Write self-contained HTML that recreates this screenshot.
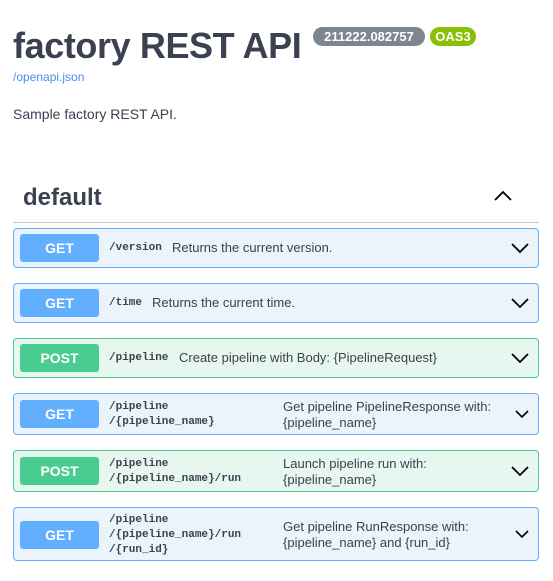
<!DOCTYPE html>
<html><head><meta charset="utf-8"><style>
*{box-sizing:border-box;margin:0;padding:0}
body{width:553px;height:581px;background:#fff;font-family:"Liberation Sans",Arial,sans-serif;color:#3b4151;position:relative;overflow:hidden}
.a{position:absolute}
h1{position:absolute;left:13px;top:25px;font-size:36px;font-weight:bold;color:#3b4151;letter-spacing:-0.4px;white-space:nowrap}
.badge{position:absolute;height:19px;border-radius:10px;color:#fff;font-weight:bold;font-size:13px;line-height:19px;text-align:center}
.op{position:absolute;left:13px;width:526px;border:1px solid;border-radius:4px}
.get{background:#ebf3fb;border-color:#61affe}
.post{background:#e8f6f0;border-color:#49cc90}
.m{position:absolute;left:6px;width:79px;height:28px;border-radius:3px;color:#fff;font-weight:bold;font-size:14px;line-height:28px;text-align:center}
.get .m{background:#61affe}.post .m{background:#49cc90}
.p{position:absolute;left:95px;font-family:"Liberation Mono","DejaVu Sans Mono",monospace;font-weight:bold;font-size:11px;color:#3b4151;line-height:15px;white-space:nowrap}
.d{position:absolute;font-size:13px;color:#3b4151;line-height:16px;white-space:nowrap}
.chev{position:absolute;right:8px}
</style></head><body>
<h1>factory REST API</h1>
<div class="badge" style="left:313px;top:27px;width:112px;background:#7d8492">211222.082757</div>
<div class="badge" style="left:430px;top:27px;width:46px;background:#89bf04">OAS3</div>
<div class="a" style="left:13px;top:70px;font-size:12px;color:#4990e2">/openapi.json</div>
<div class="a" style="left:13px;top:106px;font-size:14px">Sample factory REST API.</div>
<div class="a" style="left:23px;top:184px;font-size:24px;font-weight:bold">default</div>
<svg class="a" style="left:493px;top:189px" width="20" height="14" viewBox="0 0 20 14"><path d="M2 11 L10 3 L18 11" fill="none" stroke="#000" stroke-width="1.8"/></svg>
<div class="a" style="left:13px;top:222px;width:526px;height:1px;background:#c8c8c8"></div>

<div class="op get" style="top:228px;height:40px"><div class="m" style="top:5px">GET</div><div class="p" style="top:12px">/version</div><div class="d" style="left:158px;top:11px">Returns the current version.</div>
<svg class="chev" style="top:12px" width="20" height="14" viewBox="0 0 20 14"><path d="M2 3 L10 11 L18 3" fill="none" stroke="#000" stroke-width="1.8"/></svg></div>

<div class="op get" style="top:283px;height:40px"><div class="m" style="top:5px">GET</div><div class="p" style="top:12px">/time</div><div class="d" style="left:138px;top:11px">Returns the current time.</div>
<svg class="chev" style="top:12px" width="20" height="14" viewBox="0 0 20 14"><path d="M2 3 L10 11 L18 3" fill="none" stroke="#000" stroke-width="1.8"/></svg></div>

<div class="op post" style="top:338px;height:40px"><div class="m" style="top:5px">POST</div><div class="p" style="top:12px">/pipeline</div><div class="d" style="left:165px;top:11px">Create pipeline with Body: {PipelineRequest}</div>
<svg class="chev" style="top:12px" width="20" height="14" viewBox="0 0 20 14"><path d="M2 3 L10 11 L18 3" fill="none" stroke="#000" stroke-width="1.8"/></svg></div>

<div class="op get" style="top:393px;height:42px"><div class="m" style="top:6px">GET</div><div class="p" style="top:6px">/pipeline<br>/{pipeline_name}</div><div class="d" style="left:269px;top:5px">Get pipeline PipelineResponse with:<br>{pipeline_name}</div>
<svg class="chev" style="top:15px" width="16" height="11" viewBox="0 0 16 11"><path d="M2 2 L8 8 L14 2" fill="none" stroke="#000" stroke-width="1.6"/></svg></div>

<div class="op post" style="top:450px;height:42px"><div class="m" style="top:6px">POST</div><div class="p" style="top:6px">/pipeline<br>/{pipeline_name}/run</div><div class="d" style="left:269px;top:5px">Launch pipeline run with:<br>{pipeline_name}</div>
<svg class="chev" style="top:13px" width="20" height="14" viewBox="0 0 20 14"><path d="M2 3 L10 11 L18 3" fill="none" stroke="#000" stroke-width="1.8"/></svg></div>

<div class="op get" style="top:507px;height:54px"><div class="m" style="top:13px">GET</div><div class="p" style="top:5px">/pipeline<br>/{pipeline_name}/run<br>/{run_id}</div><div class="d" style="left:269px;top:11px">Get pipeline RunResponse with:<br>{pipeline_name} and {run_id}</div>
<svg class="chev" style="top:21px" width="16" height="11" viewBox="0 0 16 11"><path d="M2 2 L8 8 L14 2" fill="none" stroke="#000" stroke-width="1.6"/></svg></div>
</body></html>
